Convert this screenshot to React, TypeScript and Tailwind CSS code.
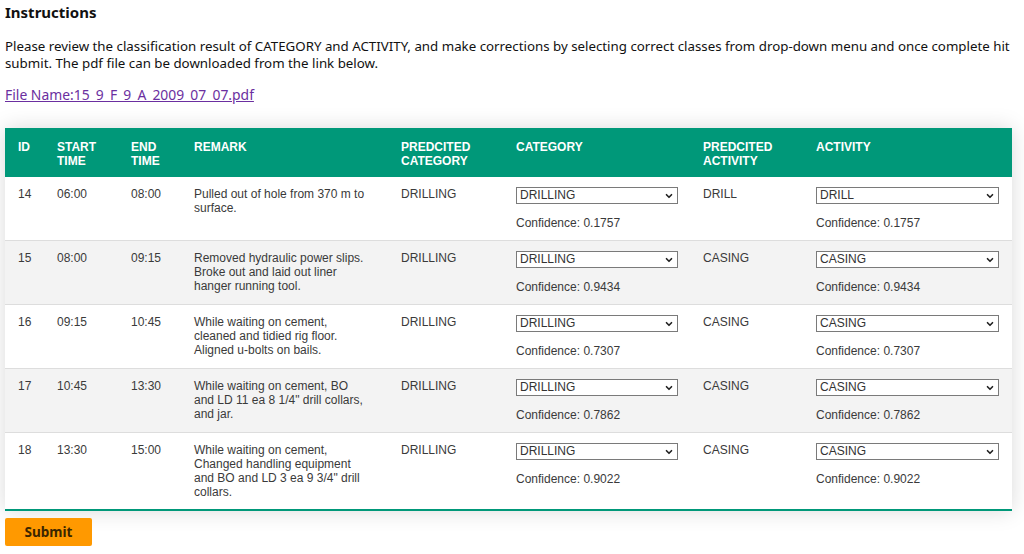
import { ChevronDown } from 'lucide-react';

const rows = [
  {
    id: 14,
    start: '06:00',
    end: '08:00',
    remark: 'Pulled out of hole from 370 m to surface.',
    predCategory: 'DRILLING',
    category: 'DRILLING',
    catConf: '0.1757',
    predActivity: 'DRILL',
    activity: 'DRILL',
    actConf: '0.1757',
  },
  {
    id: 15,
    start: '08:00',
    end: '09:15',
    remark: 'Removed hydraulic power slips. Broke out and laid out liner hanger running tool.',
    predCategory: 'DRILLING',
    category: 'DRILLING',
    catConf: '0.9434',
    predActivity: 'CASING',
    activity: 'CASING',
    actConf: '0.9434',
  },
  {
    id: 16,
    start: '09:15',
    end: '10:45',
    remark: 'While waiting on cement, cleaned and tidied rig floor. Aligned u-bolts on bails.',
    predCategory: 'DRILLING',
    category: 'DRILLING',
    catConf: '0.7307',
    predActivity: 'CASING',
    activity: 'CASING',
    actConf: '0.7307',
  },
  {
    id: 17,
    start: '10:45',
    end: '13:30',
    remark: 'While waiting on cement, BO and LD 11 ea 8 1/4" drill collars, and jar.',
    predCategory: 'DRILLING',
    category: 'DRILLING',
    catConf: '0.7862',
    predActivity: 'CASING',
    activity: 'CASING',
    actConf: '0.7862',
  },
  {
    id: 18,
    start: '13:30',
    end: '15:00',
    remark: 'While waiting on cement, Changed handling equipment and BO and LD 3 ea 9 3/4" drill collars.',
    predCategory: 'DRILLING',
    category: 'DRILLING',
    catConf: '0.9022',
    predActivity: 'CASING',
    activity: 'CASING',
    actConf: '0.9022',
  },
];

const categoryOptions = ['DRILLING', 'COMPLETION', 'FORMATION EVALUATION', 'INTERRUPTION', 'MOVING'];
const activityOptions = ['DRILL', 'CASING', 'CEMENT', 'CIRCULATING CONDITIONING', 'TRIP', 'WAIT'];

const Dropdown = ({ value, options, width }: { value: string; options: string[]; width: string }) => (
  <div className={`relative ${width}`}>
    <select
      defaultValue={value}
      className="w-full h-[17px] appearance-none border border-[#7a7a7a] bg-white pl-[3px] text-[12px] leading-[15px] text-[#333] outline-none"
    >
      {options.map((o) => (
        <option key={o}>{o}</option>
      ))}
    </select>
    <ChevronDown
      className="pointer-events-none absolute right-[4px] top-[4px] h-[10px] w-[10px] text-[#222]"
      strokeWidth={4}
    />
  </div>
);

export default function App() {
  return (
    <div className="min-h-screen bg-white px-[5px] pt-[2px] text-[#111] font-['Noto_Sans',sans-serif]">
      {/* Header */}
      <h1 className="text-[15px] font-bold leading-[20px]">Instructions</h1>
      <p className="mt-[16px] text-[13.3px] leading-[17px]">
        Please review the classification result of CATEGORY and ACTIVITY, and make corrections by selecting correct
        classes from drop-down menu and once complete hit submit. The pdf file can be downloaded from the link below.
      </p>
      <a href="#" className="mt-[14px] block text-[13.9px] leading-[17px] text-[#6b2fa0] underline">
        File Name:15_9_F_9_A_2009_07_07.pdf
      </a>

      {/* Table */}
      <table className="mt-[25px] w-[1007px] table-fixed border-collapse font-['Liberation_Sans',Arial,sans-serif] text-[12px] leading-[14px] shadow-[0_0_20px_rgba(0,0,0,0.15)]">
        <colgroup>
          <col className="w-[39px]" />
          <col className="w-[74px]" />
          <col className="w-[63px]" />
          <col className="w-[207px]" />
          <col className="w-[115px]" />
          <col className="w-[187px]" />
          <col className="w-[113px]" />
          <col className="w-[209px]" />
        </colgroup>
        <thead>
          <tr className="bg-[#009879] text-left text-white">
            <th className="pl-[13px] pt-[12px] pb-[9px] align-top font-bold">ID</th>
            <th className="pl-[13px] pt-[12px] pb-[9px] align-top font-bold">
              START
              <br />
              TIME
            </th>
            <th className="pl-[13px] pt-[12px] pb-[9px] align-top font-bold">
              END
              <br />
              TIME
            </th>
            <th className="pl-[13px] pt-[12px] pb-[9px] align-top font-bold">REMARK</th>
            <th className="pl-[13px] pt-[12px] pb-[9px] align-top font-bold">
              PREDCITED
              <br />
              CATEGORY
            </th>
            <th className="pl-[13px] pt-[12px] pb-[9px] align-top font-bold">CATEGORY</th>
            <th className="pl-[13px] pt-[12px] pb-[9px] align-top font-bold">
              PREDCITED
              <br />
              ACTIVITY
            </th>
            <th className="pl-[13px] pt-[12px] pb-[9px] align-top font-bold">ACTIVITY</th>
          </tr>
        </thead>
        <tbody className="text-[#3a3a3a]">
          {rows.map((r, i) => (
            <tr
              key={r.id}
              className={`border-b ${
                i === rows.length - 1 ? 'border-b-2 border-[#009879]' : 'border-[#dddddd]'
              } ${i % 2 === 1 ? 'bg-[#f3f3f3]' : 'bg-white'}`}
            >
              <td className="pl-[13px] pt-[10px] pb-[10px] align-top">{r.id}</td>
              <td className="pl-[13px] pt-[10px] pb-[10px] align-top">{r.start}</td>
              <td className="pl-[13px] pt-[10px] pb-[10px] align-top">{r.end}</td>
              <td className="pl-[13px] pr-[19px] pt-[10px] pb-[10px] align-top">{r.remark}</td>
              <td className="pl-[13px] pt-[10px] pb-[10px] align-top">{r.predCategory}</td>
              <td className="pl-[13px] pt-[10px] pb-[10px] align-top">
                <Dropdown value={r.category} options={categoryOptions} width="w-[162px]" />
                <div className="mt-[12px]">Confidence: {r.catConf}</div>
              </td>
              <td className="pl-[13px] pt-[10px] pb-[10px] align-top">{r.predActivity}</td>
              <td className="pl-[13px] pt-[10px] pb-[10px] align-top">
                <Dropdown value={r.activity} options={activityOptions} width="w-[183px]" />
                <div className="mt-[12px]">Confidence: {r.actConf}</div>
              </td>
            </tr>
          ))}
        </tbody>
      </table>

      {/* Submit */}
      <button className="mt-[7px] h-[28px] w-[87px] rounded-[2px] bg-[#ff9900] text-[13.5px] font-bold text-[#3b2600]">
        Submit
      </button>
    </div>
  );
}
